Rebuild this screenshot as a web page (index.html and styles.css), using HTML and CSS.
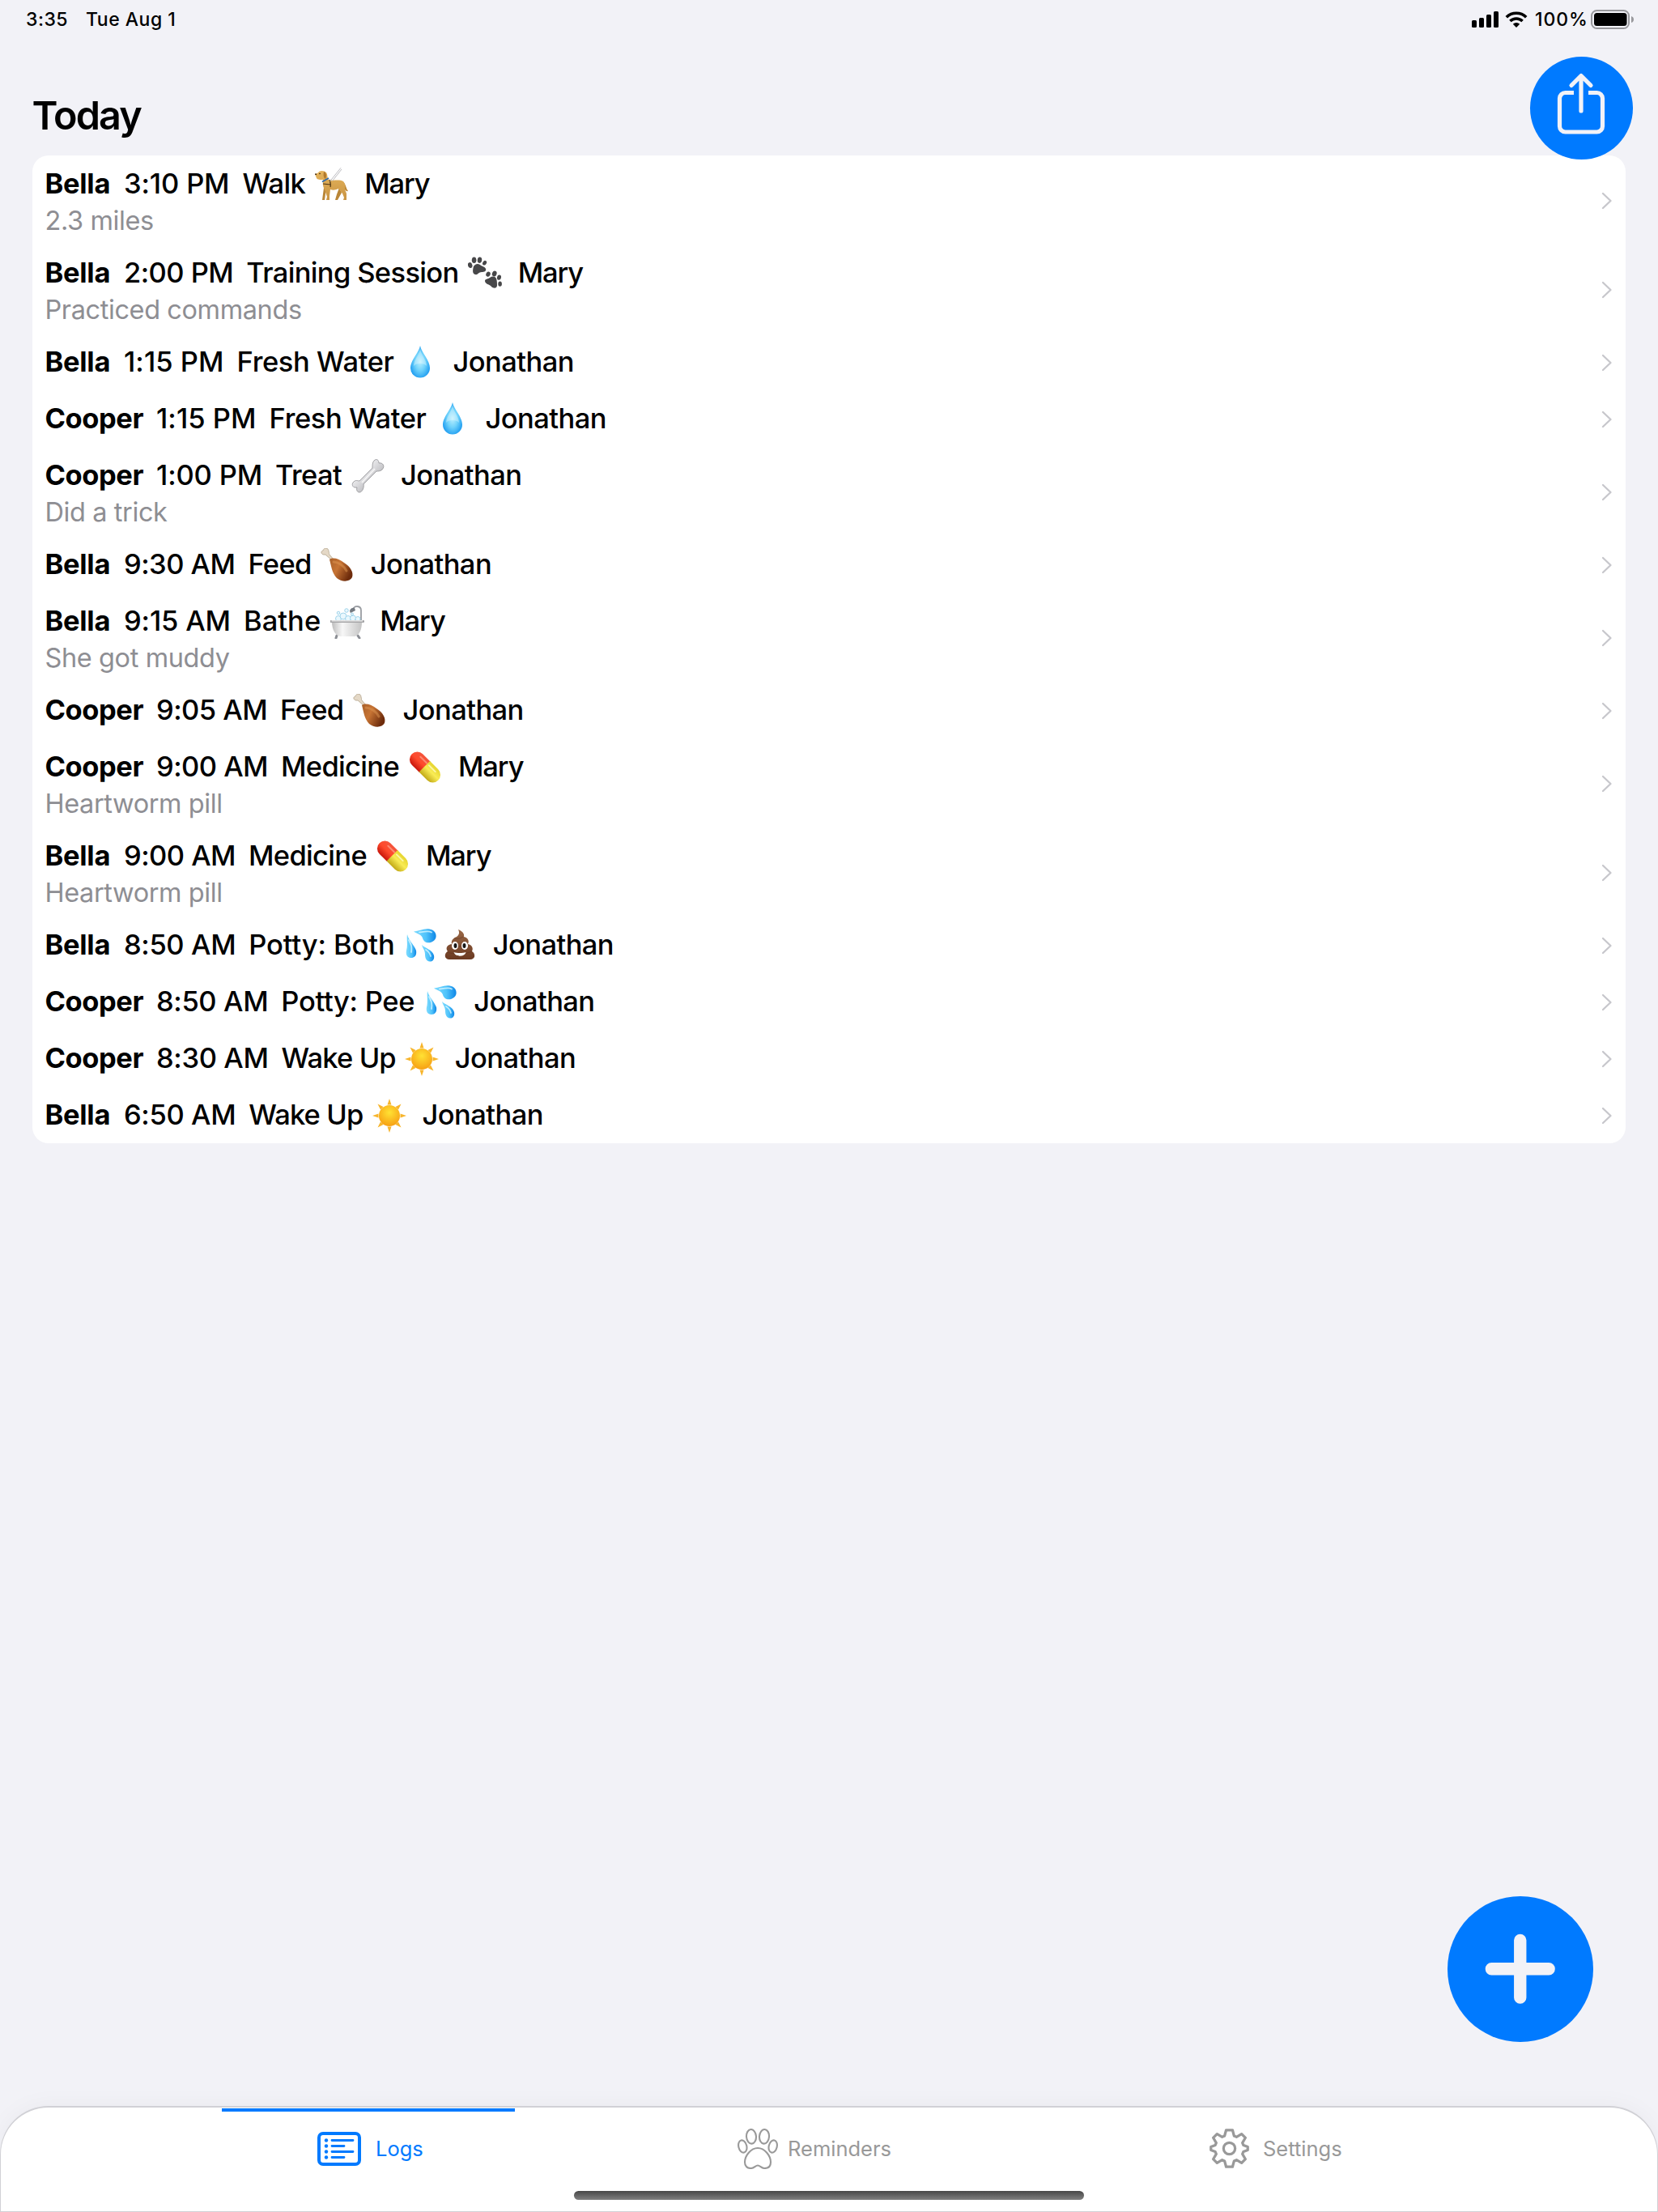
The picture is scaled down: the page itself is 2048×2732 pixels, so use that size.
FILE: index.html
```
<!DOCTYPE html>
<html lang="en">
<head>
<meta charset="utf-8">
<title>Today</title>
<link rel="stylesheet" href="styles.css">
</head>
<body>
<svg class="defs" width="0" height="0" aria-hidden="true">
  <defs>
    <linearGradient id="gDog" x1="0" y1="0" x2="0" y2="1"><stop offset="0" stop-color="#e5b45c"/><stop offset="1" stop-color="#c99443"/></linearGradient>
    <radialGradient id="gDrop" cx=".5" cy=".5" r=".62"><stop offset="0" stop-color="#bdf0ff"/><stop offset=".45" stop-color="#6fd2fb"/><stop offset="1" stop-color="#0a8fee"/></radialGradient>
    <linearGradient id="gSweat" x1="0" y1="0" x2="1" y2="0"><stop offset="0" stop-color="#7fdcff"/><stop offset=".55" stop-color="#4fc3fb"/><stop offset="1" stop-color="#0d86e6"/></linearGradient>
    <linearGradient id="gBone" x1="0" y1="0" x2="1" y2="1"><stop offset=".3" stop-color="#f1f1f3"/><stop offset=".75" stop-color="#b4b4b8"/></linearGradient>
    <linearGradient id="gLeg" x1="0" y1="0" x2="1" y2=".5"><stop offset="0" stop-color="#a9602a"/><stop offset=".45" stop-color="#c77434"/><stop offset="1" stop-color="#6e2c0c"/></linearGradient>
    <linearGradient id="gTub" x1="0" y1="0" x2="1" y2="0"><stop offset="0" stop-color="#bdbdbd"/><stop offset=".35" stop-color="#f7f7f7"/><stop offset="1" stop-color="#c4c4c4"/></linearGradient>
    <linearGradient id="gRed" x1="0" y1="0" x2="0" y2="1"><stop offset="0" stop-color="#f4553c"/><stop offset=".5" stop-color="#ff4a2c"/><stop offset="1" stop-color="#c8160c"/></linearGradient>
    <linearGradient id="gYellow" x1="0" y1="0" x2="0" y2="1"><stop offset="0" stop-color="#e6d52e"/><stop offset=".45" stop-color="#f9ec55"/><stop offset="1" stop-color="#c2a916"/></linearGradient>
    <linearGradient id="gPoop" x1="0" y1="0" x2="0" y2="1"><stop offset="0" stop-color="#9a6846"/><stop offset="1" stop-color="#6b3a22"/></linearGradient>
    <radialGradient id="gSun" cx=".5" cy=".35" r=".65"><stop offset="0" stop-color="#ffe234"/><stop offset="1" stop-color="#f7a013"/></radialGradient>
  </defs>
  <symbol id="dog" viewBox="0 0 42 42">
    <path d="M34 17c4 2 4 8 7 12-3 1-5-3-7-7z" fill="#c08a3a"/>
    <path d="M14 25l-2 15h-3l2-15zM30 25l-3 8-2 7h3l5-9z" fill="#b98637"/>
    <path d="M0 8c2-1 4-1 5-3 3-2 7-1 9 1 2 3 1 7 3 9 5 2 13-1 18 2 3 3 2 7 2 10l2 5v8h-4l1-3-2-5-5-6c-4 2-7 2-10 1l-1 8v5h-4l1-4-3-9c-3-5-2-8-2-12-3 0-7 0-8-2z" fill="url(#gDog)"/>
    <path d="M11 5c3 1 4 5 2 9-2-1-3-4-2-9z" fill="#b27a2d"/>
    <circle cx="6" cy="7.500" r=".8" fill="#2e1c0c"/><path d="M0 7.500h2v1.600H.5z" fill="#2e1c0c"/>
    <path d="M9 17.500L17 13" stroke="#2c6bb0" stroke-width="1.800"/>
    <path d="M18 15c1 3 2 6 1 9M10 20l9 1" stroke="#4a3314" stroke-width="1.200" fill="none"/>
    <path d="M18.500 17L32 .3M21.500 16.500L33 2" stroke="#bcbcc0" stroke-width="1" fill="none"/>
  </symbol>
  <symbol id="paws" viewBox="0 0 42 42">
    <g fill="#474749">
      <path d="M7 12c2-3 5-4 8-2 2 2 6 2 7 5 1 3-2 4-5 4-4 0-5 4-8 3-4-1-3-6-2-10z"/>
      <ellipse cx="2.700" cy="10.600" rx="2.700" ry="3.500" transform="rotate(-15 2.700 10.600)"/><ellipse cx="7.600" cy="4.200" rx="2.800" ry="3.800"/><ellipse cx="14.500" cy="4.200" rx="2.700" ry="3.700" transform="rotate(8 14.500 4.200)"/><ellipse cx="20.600" cy="7.700" rx="2.300" ry="3" transform="rotate(35 20.600 7.700)"/>
      <path d="M21 30c0-3 4-2 6-4 3-2 6-2 8 1 1 3 1 6 1 9-1 4-5 3-7 1-2-3-8-3-8-7z"/>
      <ellipse cx="25" cy="21.600" rx="2.600" ry="3.200" transform="rotate(25 25 21.600)"/><ellipse cx="32.700" cy="21" rx="2.800" ry="3.500" transform="rotate(20 32.700 21)"/><ellipse cx="38.500" cy="25.600" rx="2.500" ry="3.200" transform="rotate(10 38.500 25.600)"/><ellipse cx="39.600" cy="33.600" rx="2.300" ry="3.200"/>
    </g>
  </symbol>
  <symbol id="drop" viewBox="0 0 42 42">
    <path d="M21 0c2 9 12 18 12 27.500a12 12 0 0 1-24 0C9 18 19 9 21 0z" fill="url(#gDrop)"/>
    <path d="M21 4c-1 7-8 14-8 21 3-4 13-4 16 0 0-7-7-14-8-21z" fill="#e9fbff" opacity=".4"/>
  </symbol>
  <symbol id="bone" viewBox="0 0 42 42">
    <path d="M28 2c3-3 6-1 6 3 5-1 8 4 4 8-2 2-5 2-7 2L15 31c1 3-1 10-5 10-3 0-4-3-3-6-5 1-7-3-5-6 3-4 6-2 8-2L26 11c0-3 0-7 2-9z" fill="url(#gBone)" stroke="#98989c" stroke-width=".9"/>
    <path d="M29 12L13 29" stroke="#fff" stroke-width="2" opacity=".7"/>
  </symbol>
  <symbol id="leg" viewBox="0 0 42 42">
    <path d="M14 15L6 8C1 9-1 4 3 3c1-4 7-4 7 1 1 2 0 3 1 4l6 7z" fill="#e4d8c6" stroke="#b3a48d" stroke-width=".8"/>
    <path d="M11 14c4-3 12-1 18 4 8 5 12 12 10 18-3 6-13 6-19 1C14 31 13 21 11 14z" fill="url(#gLeg)"/>
    <path d="M16 17c6 0 13 5 16 11" stroke="#de9552" stroke-width="3" fill="none" opacity=".5" stroke-linecap="round"/>
  </symbol>
  <symbol id="tub" viewBox="0 0 42 42">
    <path d="M38 21V7c0-6-8-7-10-1" stroke="#9a9da2" stroke-width="1.800" fill="none"/><path d="M24 8c0-3 3-5 6-4l1 3-6 3z" fill="#737980"/>
    <path d="M8 38l-1 3M34 38l2 3" stroke="#8b8e94" stroke-width="3" stroke-linecap="round"/>
    <g fill="#e9f7fd" stroke="#8fcbe6" stroke-width=".8"><circle cx="10" cy="17" r="3.500"/><circle cx="16" cy="14" r="4"/><circle cx="22" cy="17" r="3.500"/><circle cx="28" cy="16.500" r="3.500"/><circle cx="34" cy="17.500" r="3"/><circle cx="20" cy="7" r="2.300"/><circle cx="10" cy="10" r="1.800"/><circle cx="27" cy="11.500" r="1.500"/></g>
    <path d="M2 21h37c0 9-3 17-9 18H12C6 38 2 30 2 21z" fill="url(#gTub)"/>
    <path d="M.8 20.500h40" stroke="#a3a3a5" stroke-width="2.800" stroke-linecap="round"/><path d="M1.500 19.900h38.500" stroke="#f5f5f5" stroke-width="1.300"/>
  </symbol>
  <symbol id="pill" viewBox="0 0 42 42">
    <g transform="rotate(45 21 20.500)">
      <path d="M21 11H7.500a9.500 9.500 0 0 0 0 19H21z" fill="url(#gRed)"/>
      <path d="M20 11h14.500a9.500 9.500 0 0 1 0 19H20z" fill="url(#gYellow)"/>
      <path d="M8 15.500h11" stroke="#ffb09c" stroke-width="2" stroke-linecap="round" opacity=".6"/><path d="M23 15.500h11" stroke="#fffbc0" stroke-width="2" stroke-linecap="round" opacity=".8"/>
    </g>
  </symbol>
  <symbol id="sweat" viewBox="0 0 42 42">
    <path d="M12 3.500C20 3 26-2 35 1.500c6 3 6 11 1 14-6 4-12 1-13-4-2-5-7-5-11-8z" fill="url(#gSweat)"/>
    <path d="M4 7c1 6 9 14 11 20 1 6-2 9-6 9-5 0-7-4-6-9C5 20 3 13 4 7z" fill="url(#gSweat)"/>
    <path d="M22 20c4 4 13 6 15 13 1 5-2 8-5 7.500-5-.5-6-5-6-9 0-5-3-7-4-11.500z" fill="url(#gSweat)"/>
    <path d="M19 4.500c7 0 10-3 15 0M6 14c3 6 4 8 3 15M27 26c3 2 5 4 6 8" stroke="#d8f6ff" stroke-width="1.800" fill="none" opacity=".8" stroke-linecap="round"/>
  </symbol>
  <symbol id="poop" viewBox="0 0 42 42">
    <path d="M19 1c5 2 8 5 7 9 5 1 7 5 5 9 5 1 7 5 5 9 5 3 4 10-2 10H8c-6 0-7-7-2-10-3-4-1-8 5-9-1-4 1-7 6-9 3-2 4-5 2-9z" fill="url(#gPoop)"/>
    <path d="M14 12c4 1 8 0 11-2M9 20c7 3 16 2 22-1M5 29c9 3 22 3 31-1" stroke="#5d321e" stroke-width="1" fill="none" opacity=".5"/>
    <ellipse cx="15" cy="21" rx="4" ry="5" fill="#fff"/><ellipse cx="27" cy="21" rx="4" ry="5" fill="#fff"/><ellipse cx="15.500" cy="21" rx="2" ry="2.900" fill="#151515"/><ellipse cx="26.500" cy="21" rx="2" ry="2.900" fill="#151515"/>
    <path d="M13.500 29c4 1.400 11 1.400 15 0-1 6-13 6.500-15 0z" fill="#fff"/>
  </symbol>
  <symbol id="sun" viewBox="0 0 42 42">
    <path d="M21 0l2.500 7.500h-5zM21 42l2.500-7.500h-5zM0 21l7.500-2.500v5zM42 21l-7.500-2.500v5zM6.500 6.500l7 3.500-3.500 3.500zM35.500 6.500l-7 3.500 3.500 3.500zM6.500 35.500l7-3.500-3.500-3.500zM35.500 35.500l-7-3.500 3.500-3.500z" fill="#f7b52c"/>
    <circle cx="21" cy="21" r="13" fill="url(#gSun)"/>
  </symbol>
  <symbol id="chevron" viewBox="0 0 14 22"><path d="M2 2l9.500 9L2 20" fill="none" stroke="#c7c7cc" stroke-width="2.300" stroke-linecap="round" stroke-linejoin="round"/></symbol>
</svg>

<main class="screen">
  <header class="status">
    <span class="clock">3:35</span><span class="date">Tue Aug 1</span>
    <svg class="signal" viewBox="0 0 34 20"><rect y="11" width="6" height="9" rx="1.500"/><rect x="9" y="8" width="6" height="12" rx="1.500"/><rect x="18" y="4" width="6" height="16" rx="1.500"/><rect x="27" width="6" height="20" rx="1.500"/></svg>
    <svg class="wifi" viewBox="0 0 28 20"><path d="M1.800 7.200a17.500 17.500 0 0 1 24.400 0M6.400 12a11 11 0 0 1 15.200 0" fill="none" stroke="#000" stroke-width="3.600"/><path d="M14 20l-4.200-4.300a6 6 0 0 1 8.400 0z"/></svg>
    <span class="percent">100%</span>
    <svg class="battery" viewBox="0 0 54 24"><rect x="1" y="1" width="46" height="22" rx="6.500" fill="none" stroke="#98989c" stroke-width="2"/><rect x="4" y="4" width="40.500" height="16" rx="3.500"/><path d="M50 8q3 1 3 4t-3 4z" fill="#98989c"/></svg>
  </header>
  <h1 class="title">Today</h1>
  <section class="card">
    <article class="row"><div class="entry"><p class="line"><b class="bella">Bella</b><span class="time ones">3:10 PM</span><span class="act">Walk</span><svg class="emoji"><use href="#dog"/></svg><span class="mary">Mary</span></p><p class="note">2.3 miles</p></div><svg class="chev"><use href="#chevron"/></svg></article>
    <article class="row"><div class="entry"><p class="line"><b class="bella">Bella</b><span class="time">2:00 PM</span><span class="act">Training Session</span><svg class="emoji"><use href="#paws"/></svg><span class="mary">Mary</span></p><p class="note">Practiced commands</p></div><svg class="chev"><use href="#chevron"/></svg></article>
    <article class="row"><div class="entry"><p class="line"><b class="bella">Bella</b><span class="time quarter">1:15 PM</span><span class="act water">Fresh Water</span><svg class="emoji"><use href="#drop"/></svg><span>Jonathan</span></p></div><svg class="chev"><use href="#chevron"/></svg></article>
    <article class="row"><div class="entry"><p class="line"><b class="cooper">Cooper</b><span class="time quarter">1:15 PM</span><span class="act water">Fresh Water</span><svg class="emoji"><use href="#drop"/></svg><span>Jonathan</span></p></div><svg class="chev"><use href="#chevron"/></svg></article>
    <article class="row"><div class="entry"><p class="line"><b class="cooper">Cooper</b><span class="time ones">1:00 PM</span><span class="act">Treat</span><svg class="emoji"><use href="#bone"/></svg><span>Jonathan</span></p><p class="note">Did a trick</p></div><svg class="chev"><use href="#chevron"/></svg></article>
    <article class="row"><div class="entry"><p class="line"><b class="bella">Bella</b><span class="time">9:30 AM</span><span class="act">Feed</span><svg class="emoji"><use href="#leg"/></svg><span>Jonathan</span></p></div><svg class="chev"><use href="#chevron"/></svg></article>
    <article class="row"><div class="entry"><p class="line"><b class="bella">Bella</b><span class="time ones">9:15 AM</span><span class="act bathe">Bathe</span><svg class="emoji"><use href="#tub"/></svg><span class="mary">Mary</span></p><p class="note">She got muddy</p></div><svg class="chev"><use href="#chevron"/></svg></article>
    <article class="row"><div class="entry"><p class="line"><b class="cooper">Cooper</b><span class="time">9:05 AM</span><span class="act">Feed</span><svg class="emoji"><use href="#leg"/></svg><span>Jonathan</span></p></div><svg class="chev"><use href="#chevron"/></svg></article>
    <article class="row"><div class="entry"><p class="line"><b class="cooper">Cooper</b><span class="time">9:00 AM</span><span class="act medicine">Medicine</span><svg class="emoji"><use href="#pill"/></svg><span class="mary">Mary</span></p><p class="note">Heartworm pill</p></div><svg class="chev"><use href="#chevron"/></svg></article>
    <article class="row"><div class="entry"><p class="line"><b class="bella">Bella</b><span class="time">9:00 AM</span><span class="act medicine">Medicine</span><svg class="emoji"><use href="#pill"/></svg><span class="mary">Mary</span></p><p class="note">Heartworm pill</p></div><svg class="chev"><use href="#chevron"/></svg></article>
    <article class="row"><div class="entry"><p class="line"><b class="bella">Bella</b><span class="time early">8:50 AM</span><span class="act both">Potty: Both</span><svg class="emoji"><use href="#sweat"/></svg><svg class="emoji second"><use href="#poop"/></svg><span>Jonathan</span></p></div><svg class="chev"><use href="#chevron"/></svg></article>
    <article class="row"><div class="entry"><p class="line"><b class="cooper">Cooper</b><span class="time early">8:50 AM</span><span class="act pee">Potty: Pee</span><svg class="emoji"><use href="#sweat"/></svg><span>Jonathan</span></p></div><svg class="chev"><use href="#chevron"/></svg></article>
    <article class="row"><div class="entry"><p class="line"><b class="cooper">Cooper</b><span class="time early">8:30 AM</span><span class="act wake">Wake Up</span><svg class="emoji"><use href="#sun"/></svg><span>Jonathan</span></p></div><svg class="chev"><use href="#chevron"/></svg></article>
    <article class="row"><div class="entry"><p class="line"><b class="bella">Bella</b><span class="time early">6:50 AM</span><span class="act wake">Wake Up</span><svg class="emoji"><use href="#sun"/></svg><span>Jonathan</span></p></div><svg class="chev"><use href="#chevron"/></svg></article>
  </section>

  <nav class="tabs">
    <a class="tab active"><svg class="icon-list" viewBox="0 0 54 42"><rect x="2" y="2" width="50" height="38" rx="5" fill="none" stroke="currentColor" stroke-width="4"/><g fill="currentColor"><circle cx="11" cy="10.500" r="2.200"/><circle cx="11" cy="17.500" r="2.200"/><circle cx="11" cy="24.500" r="2.200"/><circle cx="11" cy="31.500" r="2.200"/></g><path d="M18 10.500h26M18 17.500h15M18 24.500h26M18 31.500h15" stroke="currentColor" stroke-width="2.800" stroke-linecap="round"/></svg><span>Logs</span></a>
    <a class="tab"><svg class="icon-paw" viewBox="0 0 50 50" fill="none" stroke="currentColor" stroke-width="2.100"><ellipse cx="17" cy="9.800" rx="6" ry="8.800" transform="rotate(-4 17 9.800)"/><ellipse cx="33" cy="9.800" rx="6" ry="8.800" transform="rotate(4 33 9.800)"/><ellipse cx="6.300" cy="22" rx="5" ry="7.800" transform="rotate(-14 6.300 22)"/><ellipse cx="43.700" cy="22" rx="5" ry="7.800" transform="rotate(14 43.700 22)"/><path d="M25 24c8.500 0 16 9.500 16 17.500 0 5-3 7.500-7.500 7.500-4 0-5.500-3.500-8.500-3.500S20.500 49 16.500 49C12 49 9 46.500 9 41.500 9 33.500 16.500 24 25 24z"/></svg><span>Reminders</span></a>
    <a class="tab"><svg class="icon-gear" viewBox="0 0 50 50" fill="none" stroke="currentColor" stroke-width="3.300" stroke-linejoin="round"><circle cx="25" cy="25" r="7.300"/><path d="M21 1.800h8l2 7.400 3 1.300 6.500-3.800 4.800 4.800-3.800 6.500 1.300 3 5.400 2v4l-5.400 2-1.300 3 3.800 6.500-4.800 4.800-6.500-3.800-3 1.300-2 7.400h-8l-2-7.400-3-1.300-6.500 3.800-4.800-4.800 3.800-6.500-1.300-3-5.400-2v-4l5.400-2 1.300-3-3.800-6.500 4.800-4.800 6.500 3.800 3-1.300z"/></svg><span>Settings</span></a>
    <div class="home"></div>
  </nav>
  <button class="share" aria-label="Share"><svg viewBox="0 0 127 127" fill="none" stroke="#f2f2f7" stroke-width="5.200"><path d="M54 44.500H43.500a7 7 0 0 0-7 7V86a7 7 0 0 0 7 7h39a7 7 0 0 0 7-7V51.500a7 7 0 0 0-7-7H72"/><path d="M63 67V24M51 35.500l12-12 12 12" stroke-linecap="round" stroke-linejoin="round"/></svg></button>
  <button class="add" aria-label="Add"><svg viewBox="0 0 180 180"><path d="M54.500 90h71M90 54.500v71" stroke="#f2f2f7" stroke-width="15.400" stroke-linecap="round"/></svg></button>
</main>
</body>
</html>
```
FILE: styles.css
```
* { box-sizing: border-box; }
body { margin: 0; background: #f2f2f7; color: #000; font-family: Inter, "Liberation Sans", sans-serif; }
p, h1 { margin: 0; }
svg { display: block; flex: none; }
.defs { position: absolute; }
.screen { position: relative; width: 2048px; height: 2732px; display: flex; flex-direction: column; overflow: hidden; }

.status { height: 48px; padding: 0 29px 0 32px; display: flex; align-items: center; font-size: 23px; font-weight: 500; white-space: nowrap; }
.clock { width: 74px; letter-spacing: .5px; }
.date { flex: 1; letter-spacing: .5px; }
.signal { width: 34px; height: 20px; margin-right: 7px; }
.wifi { width: 28px; height: 20px; margin-right: 9px; }
.percent { width: 69px; letter-spacing: .9px; }
.battery { width: 54px; height: 24px; }

.title { height: 144px; padding: 65px 0 0 39.500px; font-size: 48.500px; line-height: 60px; font-weight: 600; letter-spacing: -1.800px; }

.card { margin: 0 40px; background: #fff; border-radius: 20px; display: flex; flex-direction: column; }
.row { display: flex; align-items: center; justify-content: space-between; padding-right: 16px; }
.entry { padding: 12px 0 13px 15.500px; }
.entry:has(.note) { padding-bottom: 8px; }
.line { display: flex; height: 45px; font-size: 34.500px; line-height: 45px; font-weight: 450; white-space: nowrap; letter-spacing: -.57px; }
.bella { width: 97.500px; font-weight: 700; letter-spacing: -.3px; }
.cooper { width: 137.500px; font-weight: 700; letter-spacing: -.45px; }
.time { margin-right: 16px; letter-spacing: -.55px; }
.time.ones { letter-spacing: -.15px; }
.time.quarter { letter-spacing: .05px; }
.time.early { letter-spacing: -.38px; }
.act { letter-spacing: -.65px; }
.act.water { letter-spacing: -.4px; }
.act.bathe { letter-spacing: .05px; }
.act.medicine { letter-spacing: -.68px; }
.act.both { letter-spacing: -.1px; }
.act.pee { letter-spacing: -.3px; }
.act.wake { letter-spacing: -.85px; }
.mary { letter-spacing: -1.100px; }
.emoji { width: 42px; height: 42px; margin: 3px 19.500px 0 11.500px; }
.emoji:has(+ .second) { margin-right: 6px; }
.emoji.second { margin-left: 0; }
.note { height: 45px; font-size: 32.500px; line-height: 47px; letter-spacing: -.4px; color: #8e8e93; }
.chev { width: 14px; height: 22px; margin-top: 2px; }

.tabs { position: relative; height: 131px; margin-top: auto; padding: 23px 0 0 391px; background: #fff; border: 1px solid #d1d1d6; border-top-width: 2px; border-radius: 60px 60px 0 0; box-shadow: 0 0 30px rgba(0, 0, 0, .04); display: grid; grid-template-columns: 519px 583px 300px; align-items: start; }
.tab { display: flex; align-items: center; height: 55px; color: #999; font-size: 25.500px; white-space: nowrap; }
.tab.active { color: #007aff; }
.tab.active::before { content: ""; position: absolute; left: 273px; top: 1px; width: 362px; height: 4px; background: #007aff; }
.icon-list { width: 54px; height: 42px; margin-right: 18px; }
.icon-paw { width: 50px; height: 50px; margin-right: 12px; }
.icon-gear { width: 49px; height: 49px; margin-right: 17px; }
.home { position: absolute; left: 708px; top: 103px; width: 630px; height: 11px; border-radius: 6px; background: linear-gradient(#474747, #808080); }

.share, .add { position: absolute; border: 0; padding: 0; border-radius: 50%; background: #007aff; }
.share { left: 1890px; top: 70px; width: 127px; height: 127px; }
.add { left: 1788px; top: 2342px; width: 179.500px; height: 179.500px; }
```
